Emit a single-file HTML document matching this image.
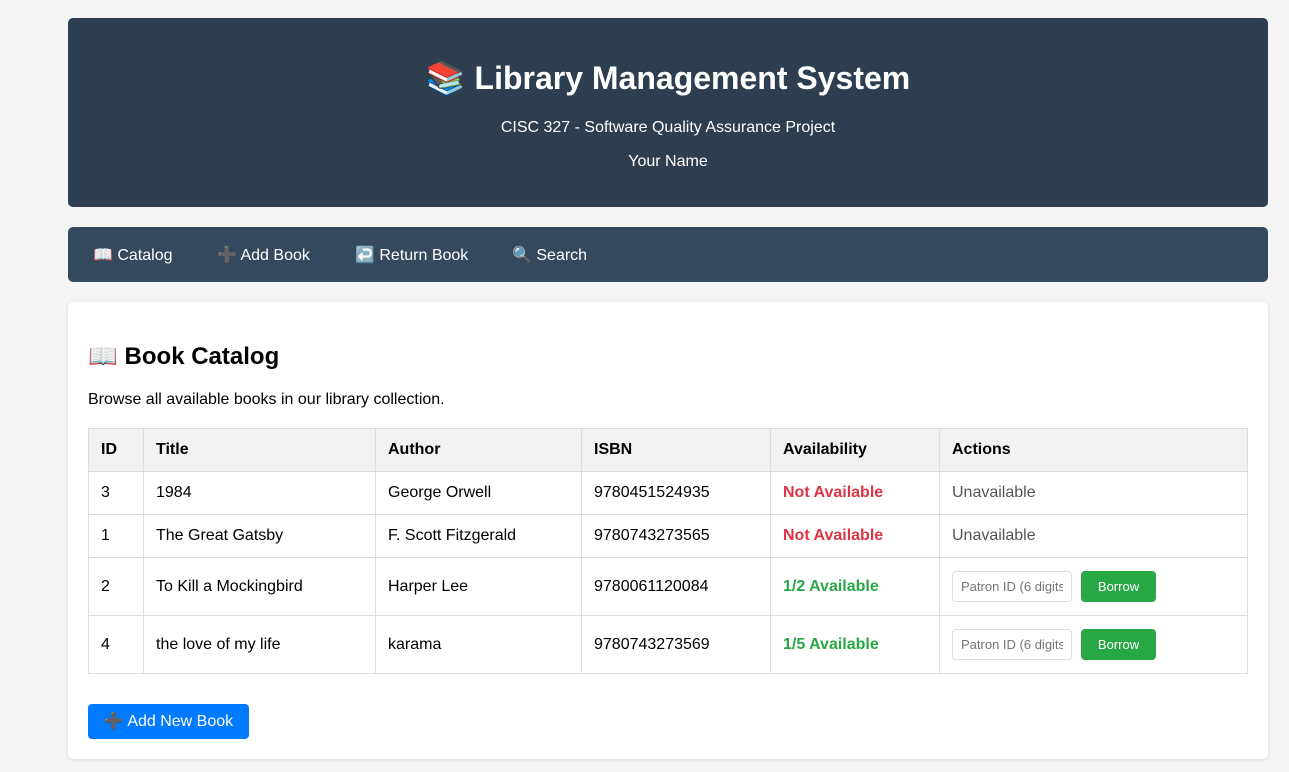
<!DOCTYPE html>
<html><head><meta charset="utf-8"><style>
*{box-sizing:border-box;margin:0;padding:0}
body{background:#f4f4f4;font-family:"Liberation Sans",Arial,sans-serif;width:1289px;height:772px;overflow:hidden;position:relative;color:#000}
.hdr{position:absolute;left:68px;top:18px;width:1200px;height:189px;background:#2c3e50;border-radius:5px;color:#fff;text-align:center}
.hdr h1{position:absolute;top:40px;width:100%;font-size:32px;line-height:40px}
.hdr .s{position:absolute;width:100%;font-size:16px}
.nav{position:absolute;left:68px;top:227px;width:1200px;height:55px;background:#34495e;border-radius:5px;color:#fff;font-size:16px}
.nav span{position:absolute;top:18px}
.card{position:absolute;left:68px;top:302px;width:1200px;height:457px;background:#fff;border-radius:5px;box-shadow:0 1px 4px rgba(0,0,0,.1)}
h2{position:absolute;left:20px;top:40px;font-size:24px}
.p{position:absolute;left:20px;top:89px;font-size:16px}
table{position:absolute;left:20px;top:126px;width:1160px;border-collapse:collapse;font-size:16px}
td,th{border:1px solid #ddd;padding:0 12px;text-align:left}
th{background:#f2f2f2;height:43px;font-weight:bold}
td{height:43px}
tr.t td{height:58px}
.na{color:#dc3545;font-weight:bold}.av{color:#28a745;font-weight:bold}.un{color:#555}
input{width:120px;height:31px;border:1px solid #ddd;border-radius:4px;padding:0 8px;font:13px "Liberation Sans",sans-serif;color:#777;vertical-align:middle}
.b{display:inline-block;width:75px;height:31px;line-height:31px;text-align:center;background:#28a745;color:#fff;border-radius:4px;font-size:13px;margin-left:9px;vertical-align:middle}
.add{position:absolute;left:20px;top:402px;width:161px;height:35px;line-height:35px;background:#007bff;color:#fff;border-radius:4px;font-size:16px;text-align:center}
</style></head><body>
<div class="hdr"><h1>📚 Library Management System</h1>
<div class="s" style="top:101px">CISC 327 - Software Quality Assurance Project</div>
<div class="s" style="top:135px">Your Name</div></div>
<div class="nav"><span style="left:25px">📖 Catalog</span><span style="left:149px">➕ Add Book</span><span style="left:287px">↩️ Return Book</span><span style="left:444px">🔍 Search</span></div>
<div class="card"><h2>📖 Book Catalog</h2>
<div class="p">Browse all available books in our library collection.</div>
<table>
<colgroup><col style="width:55px"><col style="width:232px"><col style="width:206px"><col style="width:189px"><col style="width:169px"><col></colgroup>
<tr><th>ID</th><th>Title</th><th>Author</th><th>ISBN</th><th>Availability</th><th>Actions</th></tr>
<tr><td>3</td><td>1984</td><td>George Orwell</td><td>9780451524935</td><td class="na">Not Available</td><td class="un">Unavailable</td></tr>
<tr><td>1</td><td>The Great Gatsby</td><td>F. Scott Fitzgerald</td><td>9780743273565</td><td class="na">Not Available</td><td class="un">Unavailable</td></tr>
<tr class="t"><td>2</td><td>To Kill a Mockingbird</td><td>Harper Lee</td><td>9780061120084</td><td class="av">1/2 Available</td><td><input placeholder="Patron ID (6 digits)"><span class="b">Borrow</span></td></tr>
<tr class="t"><td>4</td><td>the love of my life</td><td>karama</td><td>9780743273569</td><td class="av">1/5 Available</td><td><input placeholder="Patron ID (6 digits)"><span class="b">Borrow</span></td></tr>
</table>
<div class="add">➕ Add New Book</div>
</div>
</body></html>
